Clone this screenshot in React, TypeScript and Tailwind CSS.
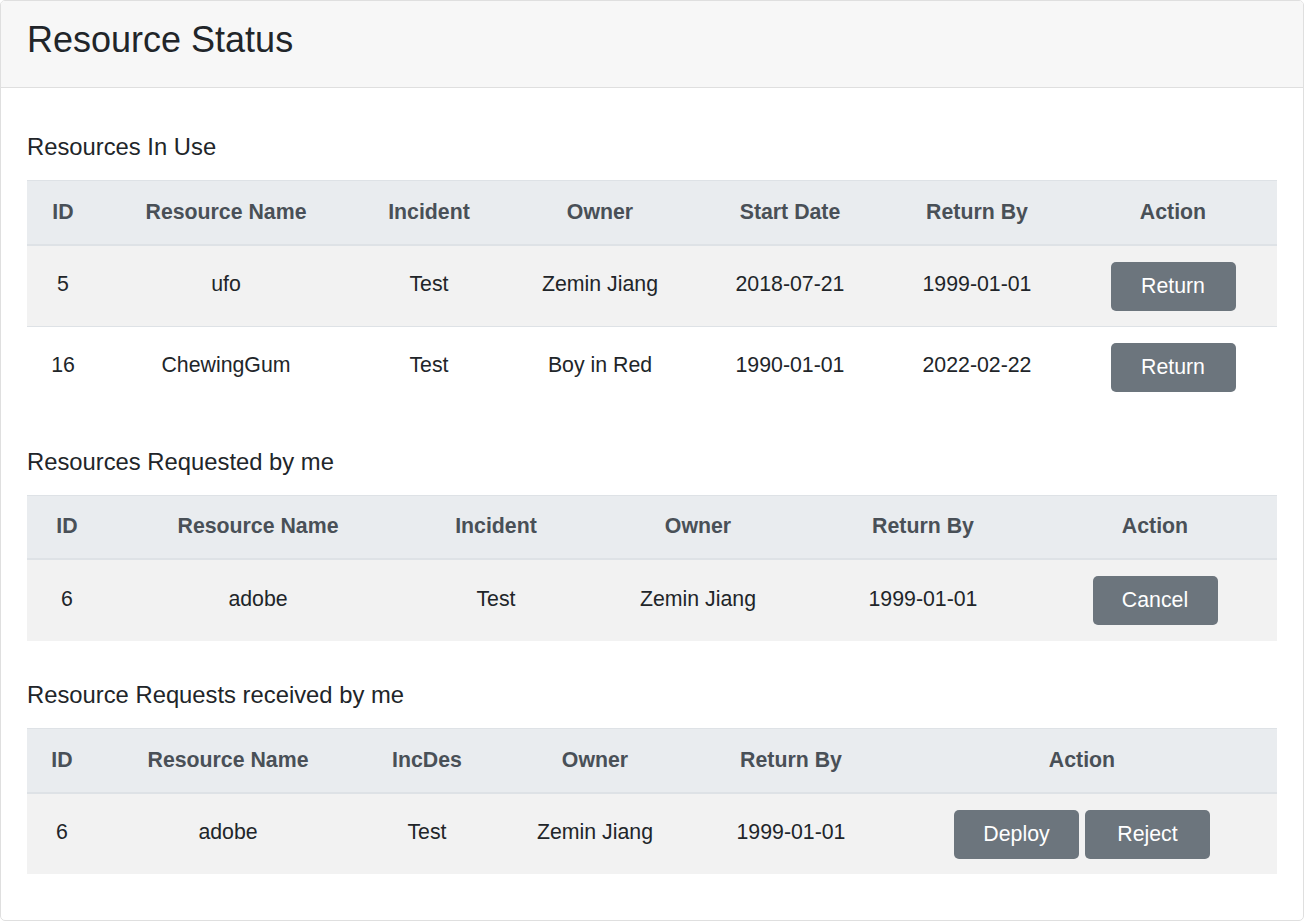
const th = "flex items-center justify-center font-bold text-[#495057]";
const td = "flex items-center justify-center pb-[2px]";

const ActionButton = ({ label }: { label: string }) => (
  <button className="h-[49px] w-[125px] rounded-[5px] bg-[#6c757d] pt-[1px] text-[21.3px] text-white">
    {label}
  </button>
);

const Heading = ({ children, gap }: { children: React.ReactNode; gap?: string }) => (
  <h5 className={`${gap ?? ""} mb-[19px] text-[23.8px] leading-[28px] font-normal`}>
    {children}
  </h5>
);

const App = () => {
  return (
    <div className="bg-white font-['Liberation_Sans',Arial,sans-serif] text-[#212529]">
      <div className="h-[921px] overflow-hidden rounded-[5px] border border-[#dfdfdf]">
        <div className="h-[87px] border-b border-[#dfdfdf] bg-[#f7f7f7] px-[26px] pt-[17px]">
          <h2 className="text-[36px] leading-[1.2] font-normal">Resource Status</h2>
        </div>

        <div className="px-[26px] pt-[45px] text-[21.3px]">
          <Heading>Resources In Use</Heading>
          <div>
            <div className="grid h-[66px] grid-cols-[72px_254px_152px_190px_190px_184px_1fr] border-t border-b-2 border-[#dee2e6] bg-[#e9ecef]">
              <div className={th}>ID</div>
              <div className={th}>Resource Name</div>
              <div className={th}>Incident</div>
              <div className={th}>Owner</div>
              <div className={th}>Start Date</div>
              <div className={th}>Return By</div>
              <div className={th}>Action</div>
            </div>
            <div className="grid h-[80px] grid-cols-[72px_254px_152px_190px_190px_184px_1fr] bg-[#f2f2f2]">
              <div className={td}>5</div>
              <div className={td}>ufo</div>
              <div className={td}>Test</div>
              <div className={td}>Zemin Jiang</div>
              <div className={td}>2018-07-21</div>
              <div className={td}>1999-01-01</div>
              <div className="flex items-center justify-center">
                <ActionButton label="Return" />
              </div>
            </div>
            <div className="grid h-[81px] grid-cols-[72px_254px_152px_190px_190px_184px_1fr] border-t border-[#dee2e6] bg-white">
              <div className={td}>16</div>
              <div className={td}>ChewingGum</div>
              <div className={td}>Test</div>
              <div className={td}>Boy in Red</div>
              <div className={td}>1990-01-01</div>
              <div className={td}>2022-02-22</div>
              <div className="flex items-center justify-center">
                <ActionButton label="Return" />
              </div>
            </div>
          </div>

          <Heading gap="mt-[41px]">Resources Requested by me</Heading>
          <div>
            <div className="grid h-[65px] grid-cols-[80px_302px_174px_230px_220px_1fr] border-t border-b-2 border-[#dee2e6] bg-[#e9ecef]">
              <div className={th}>ID</div>
              <div className={th}>Resource Name</div>
              <div className={th}>Incident</div>
              <div className={th}>Owner</div>
              <div className={th}>Return By</div>
              <div className={th}>Action</div>
            </div>
            <div className="grid h-[81px] grid-cols-[80px_302px_174px_230px_220px_1fr] bg-[#f2f2f2]">
              <div className={td}>6</div>
              <div className={td}>adobe</div>
              <div className={td}>Test</div>
              <div className={td}>Zemin Jiang</div>
              <div className={td}>1999-01-01</div>
              <div className="flex items-center justify-center">
                <ActionButton label="Cancel" />
              </div>
            </div>
          </div>

          <Heading gap="mt-[40px]">Resource Requests received by me</Heading>
          <div>
            <div className="grid h-[66px] grid-cols-[70px_262px_136px_200px_192px_1fr] border-t border-b-2 border-[#dee2e6] bg-[#e9ecef]">
              <div className={th}>ID</div>
              <div className={th}>Resource Name</div>
              <div className={th}>IncDes</div>
              <div className={th}>Owner</div>
              <div className={th}>Return By</div>
              <div className={th}>Action</div>
            </div>
            <div className="grid h-[80px] grid-cols-[70px_262px_136px_200px_192px_1fr] bg-[#f2f2f2]">
              <div className={td}>6</div>
              <div className={td}>adobe</div>
              <div className={td}>Test</div>
              <div className={td}>Zemin Jiang</div>
              <div className={td}>1999-01-01</div>
              <div className="flex items-center justify-center gap-[6px]">
                <ActionButton label="Deploy" />
                <ActionButton label="Reject" />
              </div>
            </div>
          </div>
        </div>
      </div>
    </div>
  );
};

export default App;
